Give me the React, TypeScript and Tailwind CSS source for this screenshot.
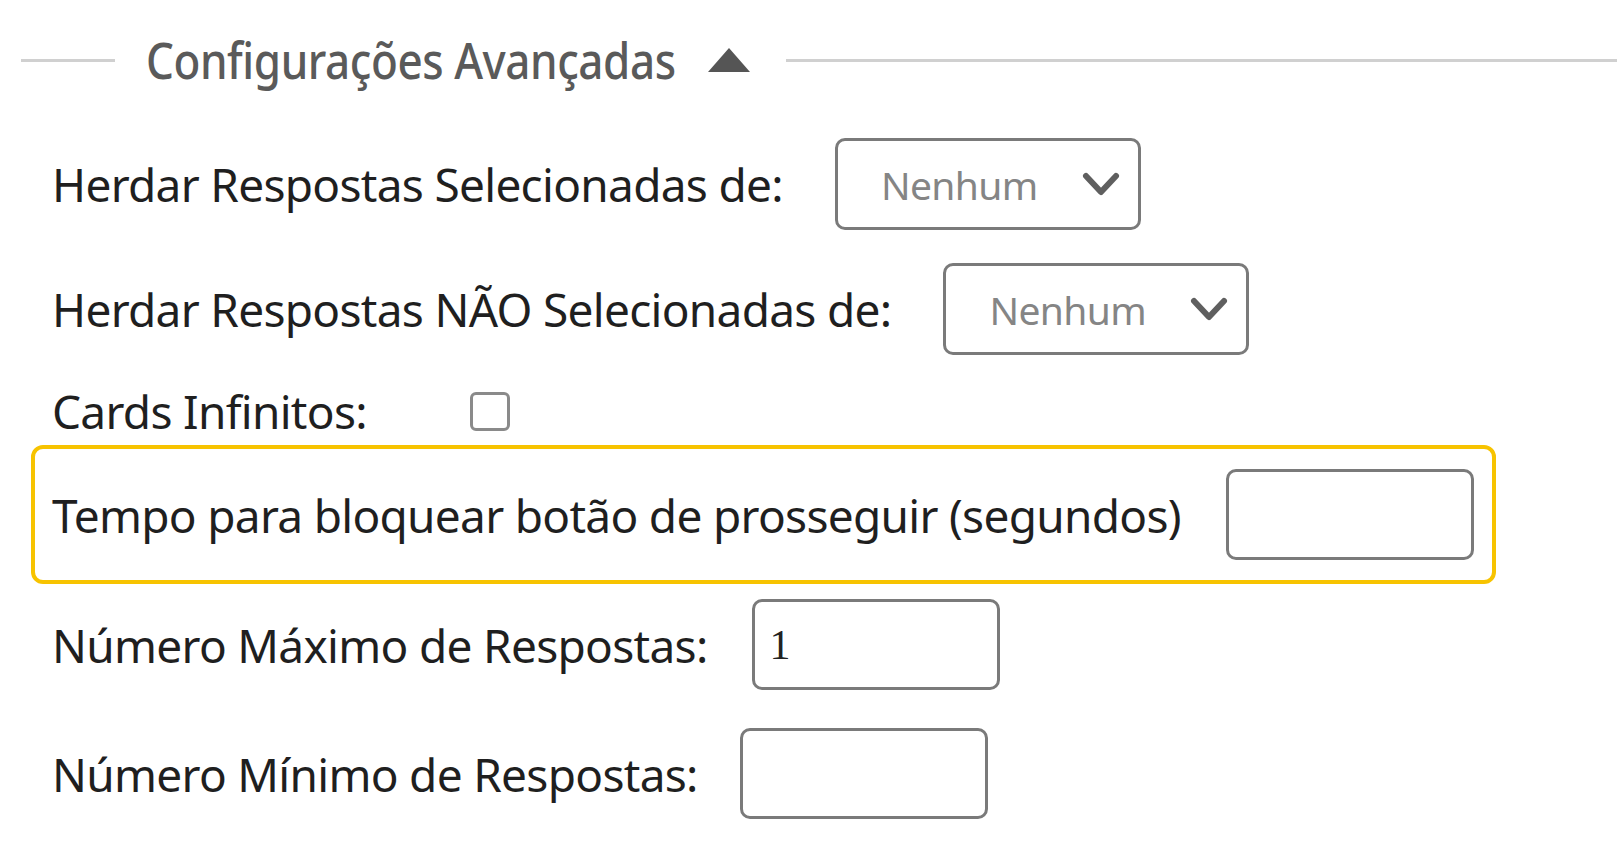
const labelFont =
  "font-['Noto_Sans','Open_Sans',sans-serif] text-[46px] tracking-[-0.7px] text-[#1f1f1f] leading-none whitespace-nowrap";

function Chevron() {
  return (
    <svg className="h-[27px] w-[40px]" viewBox="0 0 40 27" fill="none">
      <polyline points="5,5 20,21 35,5" stroke="#5f5f5f" strokeWidth="6" strokeLinejoin="round" strokeLinecap="round" />
    </svg>
  );
}

function SelectBox({ className = "" }: { className?: string }) {
  return (
    <div
      className={`flex h-[92px] w-[306px] items-center justify-between rounded-[10px] border-[3px] border-[#7a7a7a] pl-[43px] pr-[17px] ${className}`}
    >
      <span className="font-['Noto_Sans',sans-serif] text-[39px] leading-none tracking-[-0.6px] text-[#858585]">Nenhum</span>
      <Chevron />
    </div>
  );
}

function TextBox({ value = "", className = "" }: { value?: string; className?: string }) {
  return (
    <div
      className={`flex h-[91px] w-[248px] items-center rounded-[10px] border-[3px] border-[#7a7a7a] px-[15px] ${className}`}
    >
      <span className="font-['Liberation_Serif',serif] text-[42px] leading-none text-[#222]">{value}</span>
    </div>
  );
}

export default function App() {
  return (
    <div className="h-[860px] w-[1617px] overflow-hidden bg-white">
      <div className="flex h-[120px] items-center pl-[21px]">
        <div className="h-[3px] w-[94px] bg-[#d0d0d0]" />
        <span className="ml-[31px] inline-block w-[529px] whitespace-nowrap">
          <span className="inline-block origin-left scale-x-[0.88] font-['Noto_Sans',sans-serif] text-[50px] font-medium leading-none tracking-[-0.5px] text-[#5a5a5a]">
            Configurações Avançadas
          </span>
        </span>
        <svg className="ml-[32px] h-[26px] w-[44px]" viewBox="0 0 44 26">
          <polygon points="22,1 43,25 1,25" fill="#555" />
        </svg>
        <div className="ml-[35px] h-[3px] flex-1 bg-[#d0d0d0]" />
      </div>

      <div className="flex flex-col pl-[52px]">
        <div className="mt-[18px] flex items-center">
          <span className={labelFont}>Herdar Respostas Selecionadas de:</span>
          <SelectBox className="ml-[52px]" />
        </div>

        <div className="mt-[33px] flex items-center">
          <span className={labelFont}>Herdar Respostas NÃO Selecionadas de:</span>
          <SelectBox className="ml-[52px]" />
        </div>

        <div className="mt-[36px] flex h-[40px] items-center">
          <span className={labelFont}>Cards Infinitos:</span>
          <div className="ml-[103px] h-[39px] w-[40px] rounded-[6px] border-[3px] border-[#8a8a8a] bg-white" />
        </div>
      </div>

      <div className="ml-[31px] mt-[14px] flex h-[139px] w-[1465px] items-center rounded-[12px] border-[4px] border-[#f7c300] pl-[17px]">
        <span className={labelFont}>Tempo para bloquear botão de prosseguir (segundos)</span>
        <TextBox className="ml-[45px]" />
      </div>

      <div className="flex flex-col pl-[52px]">
        <div className="mt-[15px] flex items-center">
          <span className={labelFont}>Número Máximo de Respostas:</span>
          <TextBox value="1" className="ml-[44px]" />
        </div>

        <div className="mt-[38px] flex items-center">
          <span className={labelFont}>Número Mínimo de Respostas:</span>
          <TextBox className="ml-[42px]" />
        </div>
      </div>
    </div>
  );
}
